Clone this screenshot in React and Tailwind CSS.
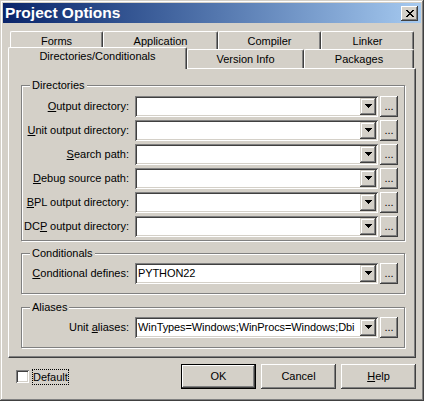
import React from "react";

const RAISED =
  "shadow-[inset_-1px_-1px_0_#404040,inset_1px_1px_0_#ffffff,inset_-2px_-2px_0_#808080,inset_2px_2px_0_#d4d0c8]";
const RAISED_SOFT =
  "shadow-[inset_-1px_-1px_0_#404040,inset_1px_1px_0_#d4d0c8,inset_-2px_-2px_0_#808080,inset_2px_2px_0_#ffffff]";
const SUNKEN =
  "shadow-[inset_1px_1px_0_#808080,inset_-1px_-1px_0_#ffffff,inset_2px_2px_0_#404040,inset_-2px_-2px_0_#d4d0c8]";

function CloseGlyph() {
  const rows = [
    "XX....XX",
    ".XX..XX.",
    "..XXXX..",
    "...XX...",
    "..XXXX..",
    ".XX..XX.",
    "XX....XX",
  ];
  const rects = [];
  rows.forEach((r, y) =>
    r.split("").forEach((c, x) => {
      if (c === "X") rects.push(<rect key={`${x}-${y}`} x={x} y={y} width="1" height="1" fill="#000" />);
    })
  );
  return (
    <svg width="8" height="7" viewBox="0 0 8 7" shapeRendering="crispEdges">
      {rects}
    </svg>
  );
}

function Arrow() {
  return (
    <svg width="7" height="4" viewBox="0 0 7 4" shapeRendering="crispEdges">
      <rect x="0" y="0" width="7" height="1" fill="#000" />
      <rect x="1" y="1" width="5" height="1" fill="#000" />
      <rect x="2" y="2" width="3" height="1" fill="#000" />
      <rect x="3" y="3" width="1" height="1" fill="#000" />
    </svg>
  );
}

function Tab({ className, children }) {
  return (
    <div
      className={`flex items-center justify-center border-t border-l border-r border-t-white border-l-white border-r-[#404040] rounded-tl-[2px] rounded-tr-[2px] shadow-[inset_-1px_0_0_#808080] bg-[#d4d0c8] ${className}`}
    >
      {children}
    </div>
  );
}

function Combo({ value }) {
  return (
    <div className={`ml-[6px] w-[243px] h-[21px] bg-white p-[2px] flex ${SUNKEN}`}>
      <div className="flex-1 overflow-hidden whitespace-nowrap pl-[1px] leading-[17px] tracking-[-0.1px]">{value}</div>
      <div className={`w-[16px] h-[17px] bg-[#d4d0c8] flex items-center justify-center pb-[1px] ${RAISED_SOFT}`}>
        <Arrow />
      </div>
    </div>
  );
}

function DotsBtn() {
  return (
    <div className={`ml-[2px] w-[18px] h-[21px] bg-[#d4d0c8] flex items-center justify-center ${RAISED}`}>
      ...
    </div>
  );
}

function Row({ label, value }) {
  return (
    <div className="flex items-center h-[21px]">
      <div className="w-[107px] text-right whitespace-nowrap">{label}</div>
      <Combo value={value} />
      <DotsBtn />
    </div>
  );
}

function Group({ title, className, children }) {
  return (
    <div
      className={`relative w-[384px] border border-[#808080] shadow-[inset_1px_1px_0_#ffffff,1px_1px_0_#ffffff] ${className}`}
    >
      <span className="absolute left-[8px] -top-[7px] bg-[#d4d0c8] px-[2px] leading-[13px]">{title}</span>
      {children}
    </div>
  );
}

function PushButton({ children, isDefault }) {
  if (isDefault) {
    return (
      <div
        className={`w-[75px] h-[25px] border border-black bg-[#d4d0c8] flex items-center justify-center shadow-[inset_-1px_-1px_0_#404040,inset_1px_1px_0_#ffffff,inset_-2px_-2px_0_#808080]`}
      >
        {children}
      </div>
    );
  }
  return (
    <div className={`w-[75px] h-[25px] bg-[#d4d0c8] flex items-center justify-center ${RAISED}`}>{children}</div>
  );
}

export default function App() {
  return (
    <div
      className={`w-[424px] h-[401px] bg-[#d4d0c8] p-[3px] flex flex-col font-['Liberation_Sans',Arial,sans-serif] text-[11px] text-black ${RAISED_SOFT}`}
    >
      {/* Title bar */}
      <div className="h-[20px] flex items-center justify-between bg-linear-to-r from-[#0a246a] to-[#a6caf0] pl-[2px] pr-[3px]">
        <span className="text-white font-bold text-[15.5px] leading-none">Project Options</span>
        <div className={`w-[17px] h-[15px] bg-[#d4d0c8] flex items-center justify-center ${RAISED}`}>
          <CloseGlyph />
        </div>
      </div>

      {/* Tabs row 1 */}
      <div className="mt-[8px] ml-[7px] flex h-[18px]">
        <Tab className="w-[93px] h-[18px] pt-[2px]">Forms</Tab>
        <Tab className="w-[115px] h-[18px] pt-[2px]">Application</Tab>
        <Tab className="w-[103px] h-[18px] pt-[2px]">Compiler</Tab>
        <Tab className="w-[93px] h-[18px] pt-[2px]">Linker</Tab>
      </div>

      {/* Tabs row 2 */}
      <div className="ml-[5px] flex items-end h-[19px]">
        <div className="relative z-10 w-[179px] h-[22px] -mb-[1px] pb-[4px] flex items-center justify-center bg-[#d4d0c8] border-t border-l border-r border-t-white border-l-white border-r-[#404040] rounded-tl-[2px] rounded-tr-[2px] shadow-[inset_-1px_0_0_#808080]">
          Directories/Conditionals
        </div>
        <Tab className="w-[117px] h-[19px]">Version Info</Tab>
        <Tab className="w-[110px] h-[19px]">Packages</Tab>
      </div>

      {/* Panel */}
      <div className="ml-[5px] w-[408px] h-[290px] flex flex-col pt-[16px] pl-[12px] border-t border-l border-r border-b border-t-white border-l-white border-r-[#404040] border-b-[#404040] shadow-[inset_-1px_-1px_0_#808080]">
        <Group title="Directories" className="h-[156px] pt-[10px] flex flex-col gap-[3px]">
          <Row label={<><u>O</u>utput directory:</>} value="" />
          <Row label={<><u>U</u>nit output directory:</>} value="" />
          <Row label={<><u>S</u>earch path:</>} value="" />
          <Row label={<><u>D</u>ebug source path:</>} value="" />
          <Row label={<><u>B</u>PL output directory:</>} value="" />
          <Row label={<>DC<u>P</u> output directory:</>} value="" />
        </Group>
        <Group title="Conditionals" className="mt-[12px] h-[41px] pt-[9px]">
          <Row label={<><u>C</u>onditional defines:</>} value="PYTHON22" />
        </Group>
        <Group title="Aliases" className="mt-[13px] h-[41px] pt-[9px]">
          <Row label={<>Unit <u>a</u>liases:</>} value="WinTypes=Windows;WinProcs=Windows;Dbi" />
        </Group>
      </div>

      {/* Bottom bar */}
      <div className="mt-[6px] h-[25px] flex items-center justify-between pl-[13px] pr-[5px]">
        <div className="flex items-center">
          <div className={`w-[13px] h-[13px] bg-white ${SUNKEN}`} />
          <span className="ml-[3px] border border-dotted border-black leading-[14px] whitespace-nowrap">Default</span>
        </div>
        <div className="flex gap-[5px]">
          <PushButton isDefault>OK</PushButton>
          <PushButton>Cancel</PushButton>
          <PushButton>
            <span>
              <u>H</u>elp
            </span>
          </PushButton>
        </div>
      </div>
    </div>
  );
}
